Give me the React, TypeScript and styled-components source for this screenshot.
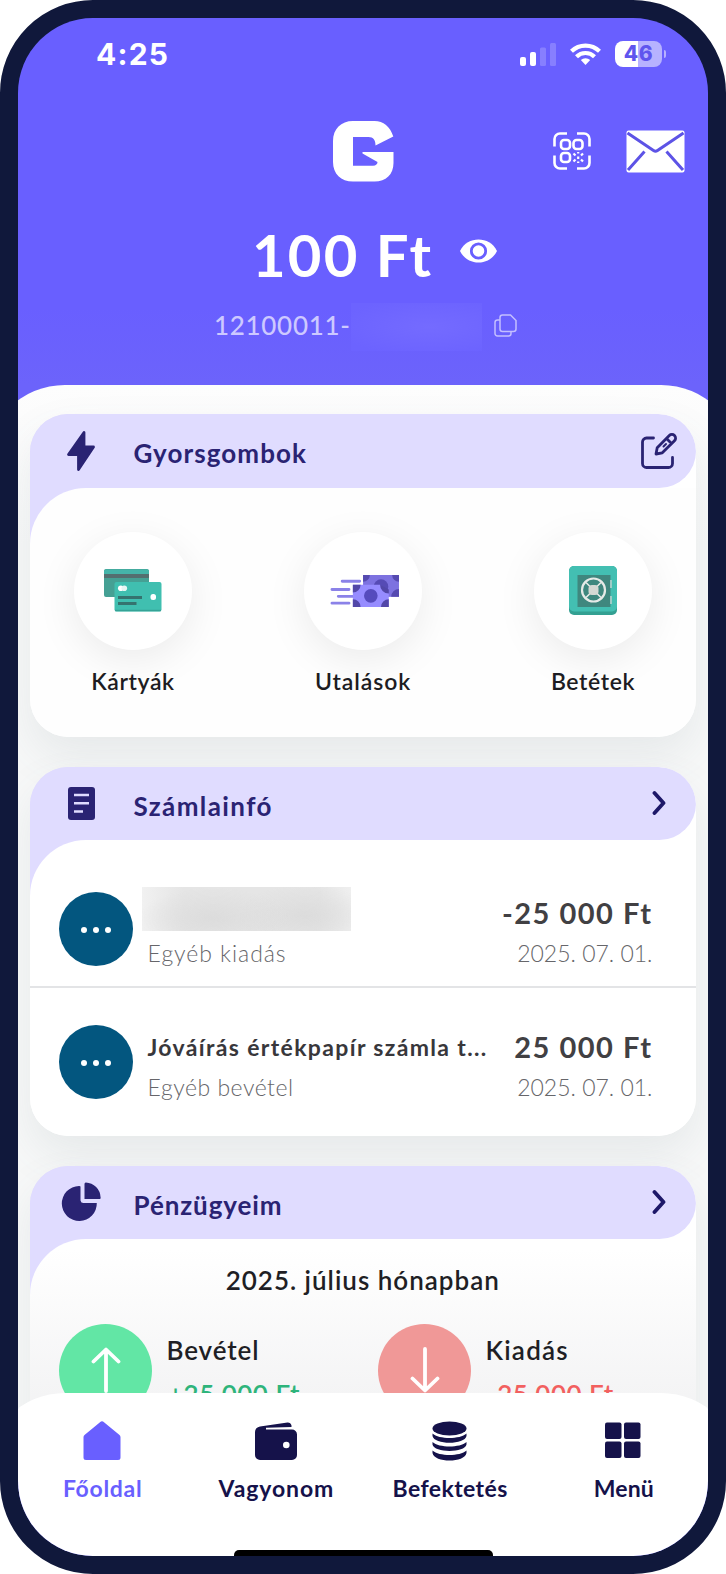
import React from "react";
import styled, { createGlobalStyle } from "styled-components";

const GlobalStyle = createGlobalStyle`
  * { box-sizing: border-box; }
  body { margin: 0; background: #fff; font-family: Lato, "Noto Sans", sans-serif; }
  svg { display: block; flex: none; }
`;

const purple = "#695fff";
const lilac = "#e0dcff";
const navy = "#15124a";
const indigo = "#2a2373";

const Phone = styled.div`
  width: 726px;
  height: 1574px;
  border: 18px solid #10183b;
  border-radius: 93px;
  background: #10183b;
`;

const Screen = styled.div`
  display: flex;
  flex-direction: column;
  height: 1538px;
  overflow: hidden;
  border-radius: 75px;
  background: linear-gradient(${purple} 0 290px, #6c63fb 366px);
`;

const Label = styled.span<{ $size: number; $weight?: number; $color: string; $spacing?: number; $line?: number }>`
  font-size: ${(p) => p.$size}px;
  font-weight: ${(p) => p.$weight ?? 500};
  color: ${(p) => p.$color};
  letter-spacing: ${(p) => p.$spacing ?? 0}px;
  line-height: ${(p) => p.$line ?? 30}px;
  white-space: pre;
`;

/* Status bar */
const StatusBar = styled.div`
  display: flex;
  align-items: center;
  height: 72px;
  padding: 0 42px 0 78px;
`;

const Clock = styled.span`
  flex: 1;
  font: 700 30px/40px Inter, sans-serif;
  letter-spacing: 1.2px;
  color: #fff;
`;

const StatusIcons = styled.div`
  display: flex;
  align-items: center;
  gap: 14px;
`;

const Battery = styled.div`
  display: flex;
  align-items: center;
  gap: 2px;
`;

const BatteryCell = styled.div`
  width: 47px;
  height: 26px;
  border-radius: 8px;
  background: linear-gradient(90deg, #fff 48%, #b7b2ff 48%);
  color: #5f55ee;
  font: 800 21px/26px Inter, sans-serif;
  letter-spacing: 0.6px;
  text-align: center;
`;

const BatteryNub = styled.div`
  width: 2px;
  height: 8px;
  border-radius: 0 3px 3px 0;
  background: #b7b2ff;
`;

/* Header */
const TopBar = styled.div`
  display: grid;
  grid-template-columns: 1fr auto 1fr;
  align-items: center;
  height: 121px;
  padding: 1px 23px 0;
`;

const TopActions = styled.div`
  grid-column: 3;
  display: flex;
  align-items: center;
  justify-content: flex-end;
  gap: 35px;
`;

const LogoSlot = styled.div`
  grid-column: 2;
`;

const Balance = styled.div`
  display: flex;
  align-items: center;
  gap: 27px;
  height: 87px;
  padding-left: 234px;
`;

const EyeSlot = styled.div`
  margin-bottom: 8px;
`;

const Account = styled.div`
  display: flex;
  align-items: center;
  height: 54px;
  padding-left: 196px;
`;

const HiddenNumber = styled.div`
  width: 131px;
  height: 48px;
  margin: 3px 12px 0 0;
  background: radial-gradient(ellipse at 60% 50%, #746bff, #6c63ff 85%);
`;

/* Sheet with cards */
const Sheet = styled.div`
  display: flex;
  flex-direction: column;
  gap: 29.5px;
  flex: 1;
  min-height: 0;
  overflow: hidden;
  margin: 32.5px -33px 0;
  padding: 29.5px 45px 0 44.5px;
  border-radius: 80px 80px 0 0;
  background: linear-gradient(#fdfdfd, #f7f8f8 160px);
`;

const Panel = styled.section<{ $height: number }>`
  flex: none;
  height: ${(p) => p.$height}px;
  border-radius: 38px;
  overflow: hidden;
  background: linear-gradient(90deg, ${lilac} 50%, #fff 50%) top / 100% 130px no-repeat, #fff;
  box-shadow: 0 20px 44px rgba(90, 105, 120, 0.1);
`;

const PanelHeader = styled.header`
  display: flex;
  align-items: center;
  height: 73.5px;
  padding-right: 19px;
  border-radius: 38px 37px 37px 0;
  background: ${lilac};
`;

const PanelIcon = styled.div`
  display: flex;
  justify-content: center;
  width: 104px;
  padding-right: 1px;
`;

const PanelTitle = styled.h2<{ $spacing: number }>`
  flex: 1;
  margin: 5px 0 0;
  font-size: 26px;
  font-weight: 700;
  line-height: 34px;
  letter-spacing: ${(p) => p.$spacing}px;
  color: ${indigo};
`;

const ActionSlot = styled.div`
  display: flex;
  justify-content: center;
  width: 36px;
`;

const PanelBody = styled.div<{ $top: number; $tint?: string }>`
  height: calc(100% - 73.5px);
  padding-top: ${(p) => p.$top}px;
  border-top-left-radius: 56px;
  background: ${(p) => p.$tint ?? "#fff"};
`;

/* Quick buttons */
const Tiles = styled.div`
  display: flex;
  justify-content: space-between;
  padding: 0 44px 0 44.5px;
`;

const Tile = styled.div`
  display: flex;
  flex-direction: column;
  align-items: center;
  gap: 16px;
  width: 118px;
`;

const TileDisc = styled.div`
  display: flex;
  align-items: center;
  justify-content: center;
  width: 118px;
  height: 118px;
  border-radius: 50%;
  background: #fff;
  box-shadow: 0 10px 42px rgba(0, 0, 0, 0.08);
`;

/* Transactions */
const Transaction = styled.div`
  display: flex;
  align-items: flex-start;
  height: 131.5px;
  padding: 37px 43.5px 0 29.5px;
  & + & {
    border-top: 2px solid #e3e4e6;
    height: 133.5px;
  }
`;

const CategoryDisc = styled.div`
  display: flex;
  align-items: center;
  justify-content: center;
  gap: 6px;
  width: 74px;
  height: 74px;
  margin-right: 14.5px;
  padding: 2px 1px 0 0;
  border-radius: 50%;
  background: #03567f;
`;

const Dot = styled.i`
  width: 6px;
  height: 6px;
  border-radius: 50%;
  background: #fff;
`;

const Details = styled.div<{ $end?: boolean }>`
  display: flex;
  flex-direction: column;
  flex: ${(p) => (p.$end ? "none" : 1)};
  align-items: ${(p) => (p.$end ? "flex-end" : "flex-start")};
  padding-top: 1.5px;
`;

const HiddenName = styled.div`
  width: 209px;
  height: 44.5px;
  margin: -6.5px 0 2.2px -6px;
  background:
    radial-gradient(ellipse 75px 30px at 34% 70%, #dcdcdc, rgba(220, 220, 220, 0)),
    radial-gradient(ellipse 70px 30px at 78% 65%, #dcdcdc, rgba(220, 220, 220, 0)),
    linear-gradient(90deg, #f1f1f1, #e5e5e5 20%, #e5e5e5 85%, #efefef);
`;

/* Monthly summary */
const MonthTitle = styled.div`
  text-align: center;
  height: 40px;
  margin-bottom: 24px;
`;

const Summary = styled.div`
  display: grid;
  grid-template-columns: 319px 319px;
  padding-left: 29.5px;
`;

const SummaryItem = styled.div`
  display: flex;
  gap: 14.5px;
`;

const SummaryDisc = styled.div<{ $color: string }>`
  display: flex;
  align-items: center;
  justify-content: center;
  width: 93px;
  height: 93px;
  border-radius: 50%;
  background: ${(p) => p.$color};
`;

const SummaryText = styled.div`
  display: flex;
  flex-direction: column;
  padding-top: 5.500px;
`;

const SummaryAmount = styled.div`
  padding: 1.5px 0 0 1.5px;
`;

/* Bottom navigation */
const NavBar = styled.nav`
  position: relative;
  flex: none;
  display: flex;
  flex-direction: column;
  justify-content: space-between;
  height: 163px;
  margin: -15px -33px 0;
  border-radius: 80px 80px 0 0;
  background: #fff;
`;

const NavItems = styled.div`
  display: grid;
  grid-template-columns: repeat(4, 1fr);
  padding: 28px 31px 0 30px;
`;

const NavItem = styled.div`
  display: flex;
  flex-direction: column;
  align-items: center;
  gap: 12px;
`;

const NavLabel = styled.div`
  padding-left: 1.5px;
`;

const HomeIndicator = styled.div`
  align-self: center;
  width: 259px;
  height: 6px;
  border-radius: 5px 5px 0 0;
  background: #000;
`;

const SignalIcon = () => (
  <svg width="36" height="23" viewBox="0 0 36 23" fill="#fff">
    <rect x="0" y="14" width="6" height="9" rx="2" />
    <rect x="10" y="9" width="6" height="14" rx="2" />
    <g opacity="0.2">
      <rect x="20" y="4.500" width="6" height="18.500" rx="1.500" />
      <rect x="30" y="0" width="6" height="23" rx="1.500" />
    </g>
  </svg>
);

const WifiIcon = () => (
  <svg width="31" height="22" viewBox="0 0 31 22" fill="none" stroke="#fff" strokeWidth="4.200">
    <path d="M1.500 8.300a20 20 0 0 1 28 0" />
    <path d="M6.500 13.700a12.800 12.800 0 0 1 18 0" />
    <path d="M15.500 22l-4.700-4.900a7 7 0 0 1 9.400 0z" fill="#fff" stroke="none" />
  </svg>
);

const Logo = () => (
  <svg width="61" height="61" viewBox="0 0 61 61" fill="#fff">
    <path d="M20 0H41.500C50.500 0 57 5.500 60.300 15.500L42.500 24.500C42.500 19 40.500 16 35.500 16H20V44.700H40C43 44.700 44.500 43 44.500 41L29.500 32.500V31H60.500V42C60.500 53.500 53 60.500 41.500 60.500H20C8 60.500 0 53 0 41V20C0 8 8 0 20 0Z" />
  </svg>
);

const ScanIcon = () => (
  <svg width="38" height="38" viewBox="0 0 38 38" fill="none" stroke="#fff" strokeWidth="2.600">
    <path d="M1.500 14.500V7a5.500 5.500 0 0 1 5.500-5.500h7M24 1.500h7A5.500 5.500 0 0 1 36.500 7v7.500M36.500 23.500V31a5.500 5.500 0 0 1-5.500 5.500h-7M14 36.500H7A5.500 5.500 0 0 1 1.500 31v-7.500" />
    <rect x="8" y="8" width="9" height="9" rx="3" />
    <rect x="20.500" y="8" width="9" height="9" rx="3" />
    <rect x="8" y="21" width="9" height="9" rx="3" />
    <path d="M20.500 21.500l2 2M30 21.500l-2 2M25.200 24.500v2.500M20.500 29.500l2-2M30 29.500l-2-2M25.200 20v1.500M25.200 29.500v1.500" strokeWidth="2.200" />
  </svg>
);

const MailIcon = () => (
  <svg width="59" height="43" viewBox="0 0 59 43">
    <rect x="0.500" y="0.500" width="58" height="42" rx="2" fill="#fff" />
    <path d="M1.500 3L27.500 20.500a3.500 3.500 0 0 0 4 0L57.500 3M2 40L18.500 21.500M57 40L40.500 21.500" fill="none" stroke="#5d53e6" strokeWidth="3" />
  </svg>
);

const EyeIcon = () => (
  <svg width="37" height="24" viewBox="0 0 37 24">
    <path d="M0 12C4 4 11 .5 18.500 .5S33 4 37 12C33 20 26 23.500 18.500 23.500S4 20 0 12Z" fill="#fff" />
    <circle cx="18.500" cy="12" r="7.200" fill="#fff" stroke={purple} strokeWidth="2.800" />
  </svg>
);

const CopyIcon = () => (
  <svg width="23" height="23" viewBox="0 0 23 23" fill="none" stroke="#c3beff" strokeWidth="1.500">
    <path d="M8.500 1H16.500L22 6.500V15a2.500 2.500 0 0 1-2.500 2.500H8.500A2.500 2.500 0 0 1 6 15V3.500A2.500 2.500 0 0 1 8.500 1Z" />
    <path d="M6 6H3.500A2.500 2.500 0 0 0 1 8.500V19.500A2.500 2.500 0 0 0 3.500 22H14.500A2.500 2.500 0 0 0 17 19.500V17.800" />
  </svg>
);

const BoltIcon = () => (
  <svg width="28" height="40" viewBox="0 0 28 40">
    <path d="M17 1.500V16H26.500L11.500 38.500V23.500H1.500Z" fill={indigo} stroke={indigo} strokeWidth="2.800" strokeLinejoin="round" />
  </svg>
);

const EditIcon = () => (
  <svg width="36" height="36" viewBox="0 0 36 36" fill="none" stroke={indigo} strokeWidth="2.800" strokeLinecap="round" strokeLinejoin="round">
    <path d="M12.500 5H5.500A4 4 0 0 0 1.500 9V30.500A4 4 0 0 0 5.500 34.500H27.500A4 4 0 0 0 31.500 30.500V24.500" />
    <path d="M15 21L16.200 14.800L28.300 2.600A3.650 3.650 0 0 1 33.500 7.800L21.300 19.800ZM25.500 5.500L30.500 10.500" />
    <path d="M22.500 13.500l2.500-2.500" strokeWidth="2" />
  </svg>
);

const DocIcon = () => (
  <svg width="27" height="33" viewBox="0 0 27 33">
    <rect width="27" height="33" rx="3" fill={indigo} />
    <path d="M6 8H21M6 16.300H21M6 24.500H15" stroke={lilac} strokeWidth="2.500" />
  </svg>
);

const PieIcon = () => (
  <svg width="40" height="40" viewBox="0 0 40 40" fill={indigo}>
    <path d="M19.500 4.500V18.500A3 3 0 0 0 22.500 21H35.800A17.500 17.500 0 1 1 18 4A1.500 1.500 0 0 1 19.500 4.500Z" />
    <path d="M24.800 .5A15.500 15.500 0 0 1 39.600 15.500A1.200 1.200 0 0 1 38.400 17H23.500V2A1.500 1.500 0 0 1 24.800 .5Z" />
  </svg>
);

const ChevronIcon = () => (
  <svg width="15" height="26" viewBox="0 0 15 26" fill="none" stroke="#1e1869" strokeWidth="3.800" strokeLinecap="round" strokeLinejoin="round">
    <path d="M2.500 3L11.500 13L2.500 23" />
  </svg>
);

const CardsIcon = () => (
  <svg width="58" height="43" viewBox="0 0 58 43">
    <rect width="45" height="28" rx="2" fill="#45a094" />
    <path d="M0 3a2 2 0 0 1 2-2.500H43A2 2 0 0 1 45 3V5H0Z" fill="#45b5aa" />
    <rect y="5" width="45" height="4" fill="#546f70" />
    <rect x="10.500" y="13" width="47" height="29.500" rx="2" fill="#40bfb0" />
    <path d="M11 41.500H57" stroke="#35a396" strokeWidth="1.500" />
    <circle cx="16.800" cy="19.300" r="2.800" fill="#fff" />
    <circle cx="20.300" cy="19.300" r="2.800" fill="#e6f6f3" />
    <path d="M14 28.500H38M14 34.500H32.500" stroke="#35736f" strokeWidth="3" />
    <rect x="46.500" y="25" width="5.500" height="6" rx="2.500" fill="#fff" />
  </svg>
);

const MoneySlot = styled.div`
  padding: 2px 0 0 3px;
`;

const MoneyIcon = () => (
  <MoneySlot>
    <svg width="70" height="33" viewBox="0 0 71 34">
      <path d="M12 6.500H30M1.500 15H19M8 22H26M1.500 29H19" stroke="#8b82e8" strokeWidth="3" strokeLinecap="round" />
      <rect x="33.500" y="0" width="37" height="22.500" fill="#7d72e0" />
      <path d="M33.500 0h7a7 7 0 0 1-7 7ZM70.500 0h-7a7 7 0 0 0 7 7ZM70.500 22.500h-8a8 8 0 0 1 8-8Z" fill="#554ab0" />
      <circle cx="52" cy="12" r="7.500" fill="#564bb5" />
      <path d="M23 10H51L60 19V33H23Z" fill="#968cff" />
      <path d="M23 10h8a8 8 0 0 1-8 8ZM23 33v-8a8 8 0 0 1 8 8ZM60 33h-8a8 8 0 0 1 8-8ZM51 10a9 9 0 0 0 9 9V15Z" fill="#5247a8" />
      <circle cx="41.500" cy="21.500" r="7" fill="#554bbd" />
    </svg>
  </MoneySlot>
);

const SafeIcon = () => (
  <svg width="48" height="49" viewBox="0 0 48 49">
    <rect width="48" height="49" rx="5" fill="#33a092" />
    <rect width="48" height="45.500" rx="5" fill="#43bfb2" />
    <rect x="8.500" y="9" width="33" height="32" fill="#3f877e" />
    <path d="M42 14v8M42 30v8" stroke="#a9cfca" strokeWidth="1.800" />
    <circle cx="24.500" cy="24" r="11.500" fill="none" stroke="#e6eae7" strokeWidth="2.200" />
    <path d="M17 16.500L32 31.500M32 16.500L17 31.500" stroke="#e6eae7" strokeWidth="1.600" />
    <rect x="19.500" y="19" width="10" height="10" rx="3.500" fill="#d5d8d3" />
  </svg>
);

const ArrowIcon = ({ down }: { down?: boolean }) => (
  <svg width="30" height="46" viewBox="0 0 30 46" fill="none" stroke="#fff" strokeWidth="3.800" strokeLinecap="round" strokeLinejoin="round">
    <path d={down ? "M15 2V43M2.500 31.500L15 43.500L27.500 31.500" : "M15 44V3M2.500 14.500L15 2.500L27.500 14.500"} />
  </svg>
);

const HomeIcon = () => (
  <svg width="38" height="40" viewBox="0 0 38 40">
    <path d="M17 1.200a3 3 0 0 1 4 0L36.500 14a3 3 0 0 1 1 2.300V36.500a2.500 2.500 0 0 1-2.500 2.500H3A2.500 2.500 0 0 1 .5 36.500V16.300a3 3 0 0 1 1-2.300Z" fill={purple} />
  </svg>
);

const WalletIcon = () => (
  <svg width="42" height="40" viewBox="0 0 42 40">
    <path d="M5 5.500L32.500 1.500A4 4 0 0 1 36.500 4.500V6L11 6.800V8.500H37A5 5 0 0 1 42 13.500V34A5 5 0 0 1 37 39H5A5 5 0 0 1 0 34V11C0 8 2 6 5 5.500Z" fill={navy} />
    <circle cx="31.300" cy="24" r="3.300" fill="#fff" />
  </svg>
);

const CoinsIcon = () => (
  <svg width="35" height="40" viewBox="0 0 35 40" fill={navy}>
    <ellipse cx="17.500" cy="7.500" rx="17" ry="7" />
    <path d="M.5 12.500C7 18.500 28 18.500 34.500 12.500V15C33 24 2 24 .5 15Z" />
    <path d="M.5 21C7 27 28 27 34.500 21V23.500C33 32 2 32 .5 23.500Z" />
    <path d="M.5 29.500C7 35.500 28 35.500 34.500 29.500V32C33 42 2 42 .5 32Z" />
  </svg>
);

const GridIcon = () => (
  <svg width="36" height="40" viewBox="0 0 36 40" fill={navy}>
    <rect x="0" y="1.500" width="16.500" height="16.500" rx="2" />
    <rect x="19" y="1.500" width="16.500" height="16.500" rx="2" />
    <rect x="0" y="20.500" width="16.500" height="16.500" rx="2" />
    <rect x="19" y="20.500" width="16.500" height="16.500" rx="2" />
  </svg>
);

const tiles = [
  { name: "Kártyák", spacing: 0.6, icon: <CardsIcon /> },
  { name: "Utalások", spacing: 0.9, icon: <MoneyIcon /> },
  { name: "Betétek", spacing: 0.6, icon: <SafeIcon /> },
];

const transactions = [
  { title: null, category: "Egyéb kiadás", spacing: 0.95, amount: "-25 000 Ft", date: "2025. 07. 01." },
  { title: "Jóváírás értékpapír számla t...", category: "Egyéb bevétel", spacing: 0.5, amount: "25 000 Ft", date: "2025. 07. 01." },
];

const navItems = [
  { name: "Főoldal", icon: <HomeIcon />, color: purple, spacing: 0.7 },
  { name: "Vagyonom", icon: <WalletIcon />, color: navy, spacing: 0.9 },
  { name: "Befektetés", icon: <CoinsIcon />, color: navy, spacing: 0.4 },
  { name: "Menü", icon: <GridIcon />, color: navy, spacing: 0.1 },
];

export default function App() {
  return (
    <>
      <GlobalStyle />
      <Phone>
        <Screen>
          <StatusBar>
            <Clock>4:25</Clock>
            <StatusIcons>
              <SignalIcon />
              <WifiIcon />
              <Battery>
                <BatteryCell>46</BatteryCell>
                <BatteryNub />
              </Battery>
            </StatusIcons>
          </StatusBar>
          <TopBar>
            <LogoSlot>
              <Logo />
            </LogoSlot>
            <TopActions>
              <ScanIcon />
              <MailIcon />
            </TopActions>
          </TopBar>
          <Balance>
            <Label $size={58} $weight={700} $color="#fff" $spacing={2.2} $line={70}>100 Ft</Label>
            <EyeSlot>
              <EyeIcon />
            </EyeSlot>
          </Balance>
          <Account>
            <Label $size={26} $weight={500} $color="#cdc9ff" $spacing={0.7}>12100011-</Label>
            <HiddenNumber />
            <CopyIcon />
          </Account>

          <Sheet>
            <Panel $height={323}>
              <PanelHeader>
                <PanelIcon><BoltIcon /></PanelIcon>
                <PanelTitle $spacing={1.1}>Gyorsgombok</PanelTitle>
                <ActionSlot><EditIcon /></ActionSlot>
              </PanelHeader>
              <PanelBody $top={44} $tint="#fefefe">
                <Tiles>
                  {tiles.map((t) => (
                    <Tile key={t.name}>
                      <TileDisc>{t.icon}</TileDisc>
                      <Label $size={23} $weight={600} $color="#1d1c22" $spacing={t.spacing}>{t.name}</Label>
                    </Tile>
                  ))}
                </Tiles>
              </PanelBody>
            </Panel>

            <Panel $height={369.5}>
              <PanelHeader>
                <PanelIcon><DocIcon /></PanelIcon>
                <PanelTitle $spacing={1.4}>Számlainfó</PanelTitle>
                <ActionSlot><ChevronIcon /></ActionSlot>
              </PanelHeader>
              <PanelBody $top={14.5}>
                {transactions.map((t) => (
                  <Transaction key={t.category}>
                    <CategoryDisc><Dot /><Dot /><Dot /></CategoryDisc>
                    <Details>
                      {t.title ? (
                        <Label $size={23} $weight={700} $color="#38373b" $spacing={1.35} $line={40.2}>{t.title}</Label>
                      ) : (
                        <HiddenName />
                      )}
                      <Label $size={23} $weight={300} $color="#66666a" $spacing={t.spacing} $line={40.2}>{t.category}</Label>
                    </Details>
                    <Details $end>
                      <Label $size={29} $weight={700} $color="#414043" $spacing={1.5} $line={40.2}>{t.amount}</Label>
                      <Label $size={23} $weight={300} $color="#66666a" $spacing={0} $line={40.2}>{t.date}</Label>
                    </Details>
                  </Transaction>
                ))}
              </PanelBody>
            </Panel>

            <Panel $height={369.5}>
              <PanelHeader>
                <PanelIcon><PieIcon /></PanelIcon>
                <PanelTitle $spacing={0.9}>Pénzügyeim</PanelTitle>
                <ActionSlot><ChevronIcon /></ActionSlot>
              </PanelHeader>
              <PanelBody $top={20.5} $tint="linear-gradient(#fff 10px, #f3f3f4 170px)">
                <MonthTitle>
                  <Label $size={26} $weight={600} $color="#1f1f25" $spacing={1} $line={41}>2025. július hónapban</Label>
                </MonthTitle>
                <Summary>
                  <SummaryItem>
                    <SummaryDisc $color="#62e6a5"><ArrowIcon /></SummaryDisc>
                    <SummaryText>
                      <Label $size={26} $weight={600} $color="#1f1f25" $spacing={0.9} $line={42}>Bevétel</Label>
                      <SummaryAmount>
                        <Label $size={26} $weight={600} $color="#2eb47b" $spacing={0.5} $line={42}>+25 000 Ft</Label>
                      </SummaryAmount>
                    </SummaryText>
                  </SummaryItem>
                  <SummaryItem>
                    <SummaryDisc $color="#f09897"><ArrowIcon down /></SummaryDisc>
                    <SummaryText>
                      <Label $size={26} $weight={600} $color="#1f1f25" $spacing={1.2} $line={42}>Kiadás</Label>
                      <SummaryAmount>
                        <Label $size={26} $weight={600} $color="#f2605f" $spacing={0.5} $line={42}>-25 000 Ft</Label>
                      </SummaryAmount>
                    </SummaryText>
                  </SummaryItem>
                </Summary>
              </PanelBody>
            </Panel>
          </Sheet>

          <NavBar>
            <NavItems>
              {navItems.map((n) => (
                <NavItem key={n.name}>
                  {n.icon}
                  <NavLabel>
                    <Label $size={23} $weight={700} $color={n.color} $spacing={n.spacing}>{n.name}</Label>
                  </NavLabel>
                </NavItem>
              ))}
            </NavItems>
            <HomeIndicator />
          </NavBar>
        </Screen>
      </Phone>
    </>
  );
}
